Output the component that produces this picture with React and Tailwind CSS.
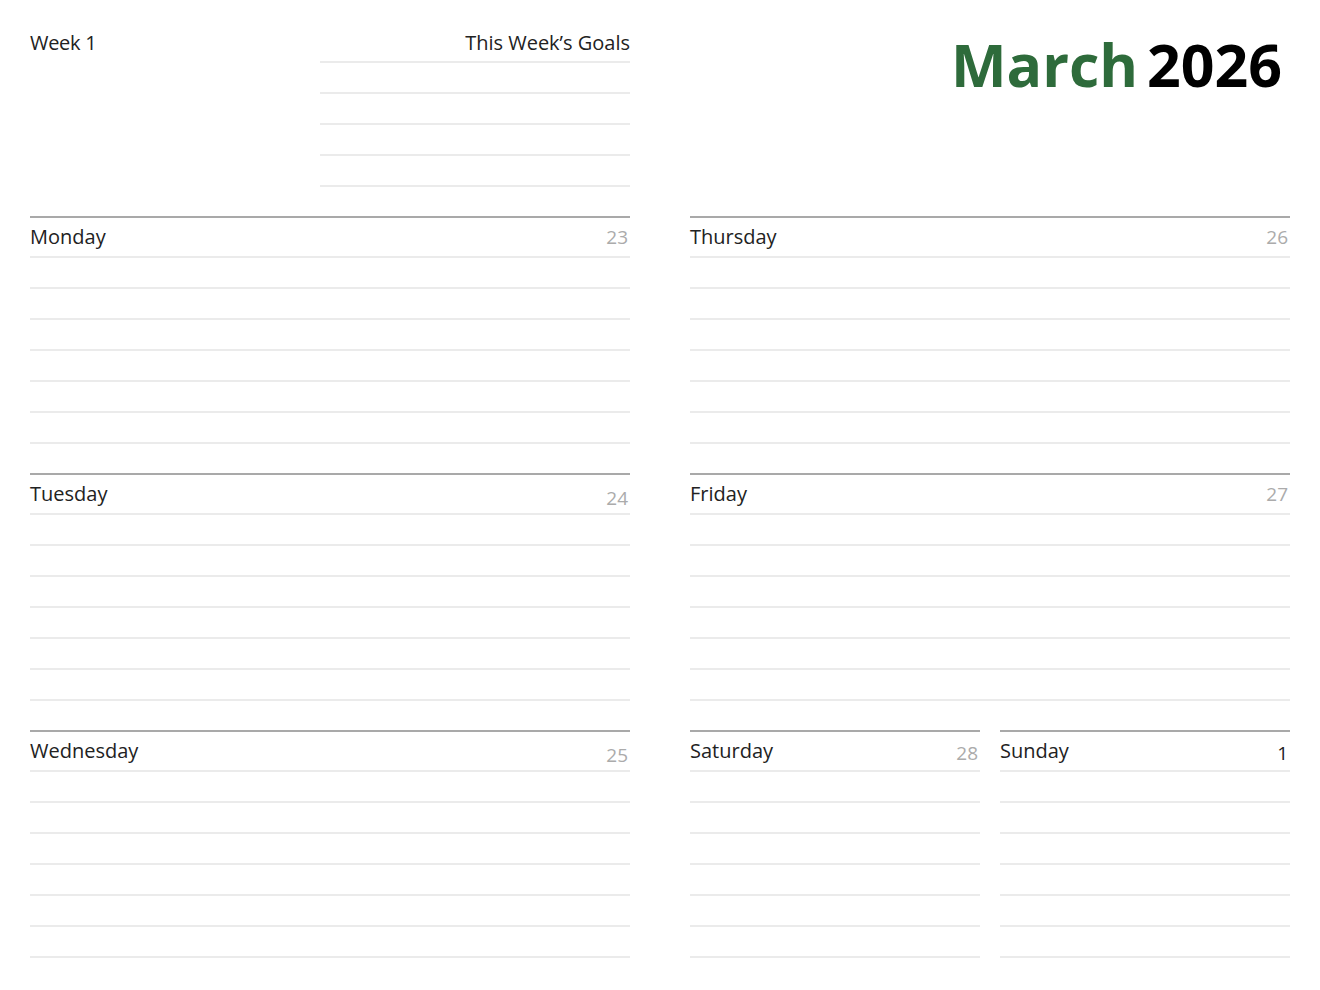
const RULE = 'h-[31px] border-b-2 border-[#ebebeb]';

function DayBlock({ name, date, dateClass = 'text-[#ababab]', numOffset = '' }) {
  return (
    <section className="flex flex-col">
      <header className="flex h-[42px] items-center justify-between border-y-2 border-t-[#a9a9a9] border-b-[#ebebeb]">
        <span className="text-[20px] leading-none text-[#222]">{name}</span>
        <span className={`pr-[2px] text-[19px] leading-none ${dateClass} ${numOffset}`}>{date}</span>
      </header>
      {[0, 1, 2, 3, 4, 5].map((i) => (
        <div key={i} className={RULE} />
      ))}
      <div className="h-[29px]" />
    </section>
  );
}

export default function App() {
  return (
    <main
      className="h-[990px] w-[1320px] overflow-hidden bg-white px-[30px]"
      style={{ fontFamily: '"Open Sans", "Noto Sans", sans-serif' }}
    >
      <div className="grid h-[216px] grid-cols-2 gap-[60px]">
        <div className="flex pt-[31px]">
          <div className="w-[290px] text-[20px] leading-[24px] tracking-[-0.3px] text-[#222]">Week 1</div>
          <div className="flex-1">
            <div className="h-[32px] border-b-2 border-[#ebebeb] text-right text-[20px] leading-[24px] text-[#222]">
              This Week’s Goals
            </div>
            {[0, 1, 2, 3].map((i) => (
              <div key={i} className={RULE} />
            ))}
          </div>
        </div>
        <div className="flex justify-end pr-[8px] pt-[24px]">
          <h1 className="flex gap-[9px] text-[59px] font-bold leading-[80px]">
            <span className="text-[#2e6b3b]">March</span>
            <span className="text-black">2026</span>
          </h1>
        </div>
      </div>

      <div className="grid grid-cols-2 gap-[60px]">
        <div className="flex flex-col">
          <DayBlock name="Monday" date="23" />
          <DayBlock name="Tuesday" date="24" numOffset="translate-y-[4px]" />
          <DayBlock name="Wednesday" date="25" numOffset="translate-y-[4px]" />
        </div>
        <div className="flex flex-col">
          <DayBlock name="Thursday" date="26" />
          <DayBlock name="Friday" date="27" />
          <div className="grid grid-cols-2 gap-[20px]">
            <DayBlock name="Saturday" date="28" numOffset="translate-y-[2px]" />
            <DayBlock name="Sunday" date="1" dateClass="text-[#222]" numOffset="translate-y-[2px]" />
          </div>
        </div>
      </div>
    </main>
  );
}
